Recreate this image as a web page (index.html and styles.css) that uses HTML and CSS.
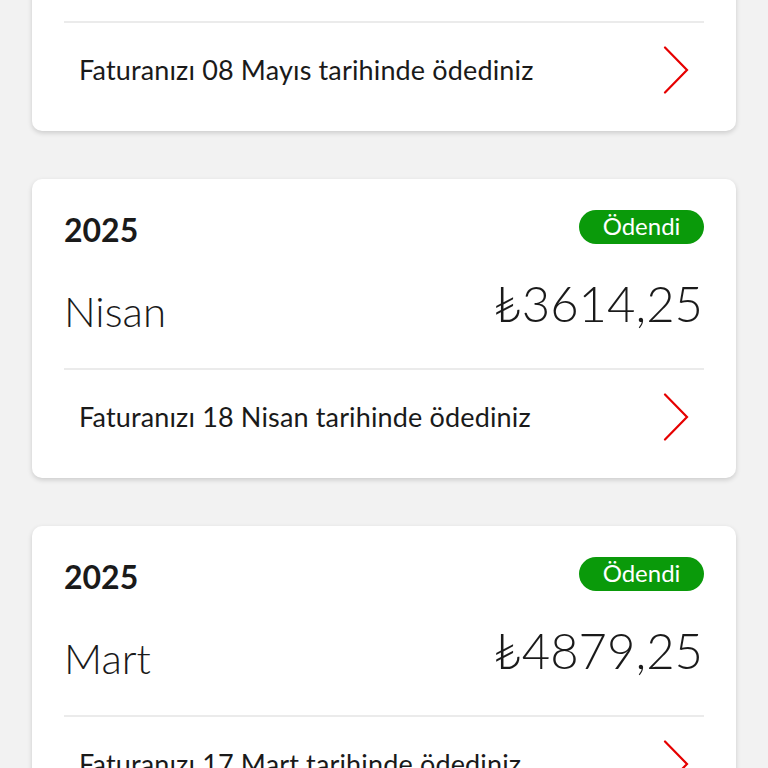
FILE: index.html
```html
<!DOCTYPE html>
<html lang="tr">
<head>
<meta charset="utf-8">
<title>Faturalar</title>
<link rel="stylesheet" href="styles.css">
</head>
<body>
<main class="list">
  <section class="card">
    <div class="head">
      <span class="year">2025</span>
      <span class="badge">Ödendi</span>
    </div>
    <div class="main-row">
      <span class="month">Mayıs</span>
      <span class="amount">₺3614,25</span>
    </div>
    <a class="link-row" href="#">
      <span class="link-text">Faturanızı 08 Mayıs tarihinde ödediniz</span>
      <svg class="chev" viewBox="0 0 26 48" width="26" height="48"><path d="M2 1.5 L24 24 L2 46.5" fill="none" stroke="#e60000" stroke-width="2.2" stroke-linecap="round" stroke-linejoin="miter"/></svg>
    </a>
  </section>
  <section class="card">
    <div class="head">
      <span class="year">2025</span>
      <span class="badge">Ödendi</span>
    </div>
    <div class="main-row">
      <span class="month">Nisan</span>
      <span class="amount">₺3614,25</span>
    </div>
    <a class="link-row" href="#">
      <span class="link-text">Faturanızı 18 Nisan tarihinde ödediniz</span>
      <svg class="chev" viewBox="0 0 26 48" width="26" height="48"><path d="M2 1.5 L24 24 L2 46.5" fill="none" stroke="#e60000" stroke-width="2.2" stroke-linecap="round" stroke-linejoin="miter"/></svg>
    </a>
  </section>
  <section class="card">
    <div class="head">
      <span class="year">2025</span>
      <span class="badge">Ödendi</span>
    </div>
    <div class="main-row">
      <span class="month">Mart</span>
      <span class="amount">₺4879,25</span>
    </div>
    <a class="link-row" href="#">
      <span class="link-text">Faturanızı 17 Mart tarihinde ödediniz</span>
      <svg class="chev" viewBox="0 0 26 48" width="26" height="48"><path d="M2 1.5 L24 24 L2 46.5" fill="none" stroke="#e60000" stroke-width="2.2" stroke-linecap="round" stroke-linejoin="miter"/></svg>
    </a>
  </section>
</main>
</body>
</html>
```
FILE: styles.css
```css
html, body {
  margin: 0;
  padding: 0;
  background: #f2f2f2;
  height: 100%;
  overflow: hidden;
}
body {
  font-family: "Lato", "Noto Sans", "DejaVu Sans", sans-serif;
  color: #1a1a1a;
}
.list {
  display: flex;
  flex-direction: column;
  gap: 48px;
  margin: -168px 32px 0;
}
.card {
  background: #fff;
  border-radius: 10px;
  box-shadow: 0 2px 5px rgba(0, 0, 0, 0.16);
  padding: 31px 32px 14px;
  display: flex;
  flex-direction: column;
  height: 299px;
  box-sizing: border-box;
}
.head {
  display: flex;
  justify-content: space-between;
  align-items: center;
  height: 34px;
}
.year {
  font-size: 32px;
  font-weight: 700;
  line-height: 34px;
  padding-top: 6px;
}
.badge {
  background: #0a9a0a;
  color: #fff;
  border-radius: 17px;
  height: 34px;
  width: 125px;
  box-sizing: border-box;
  display: flex;
  align-items: center;
  justify-content: center;
  font-size: 24px;
  line-height: 1;
  padding-bottom: 2px;
}
.main-row {
  display: flex;
  justify-content: space-between;
  align-items: flex-start;
  height: 126px;
  border-bottom: 2px solid #ebebeb;
  box-sizing: border-box;
}
.month {
  font-size: 42px;
  font-weight: 300;
  line-height: 52px;
  margin-top: 41px;
}
.amount {
  font-size: 49px;
  font-weight: 300;
  line-height: 60px;
  margin-top: 29px;
  margin-right: 1px;
}
.link-row {
  display: flex;
  justify-content: space-between;
  align-items: center;
  height: 94px;
  padding: 0 15px;
  color: inherit;
  text-decoration: none;
}
.link-text {
  font-size: 27px;
  line-height: 32px;
  letter-spacing: 0.15px;
}
.chev {
  display: block;
}
```
